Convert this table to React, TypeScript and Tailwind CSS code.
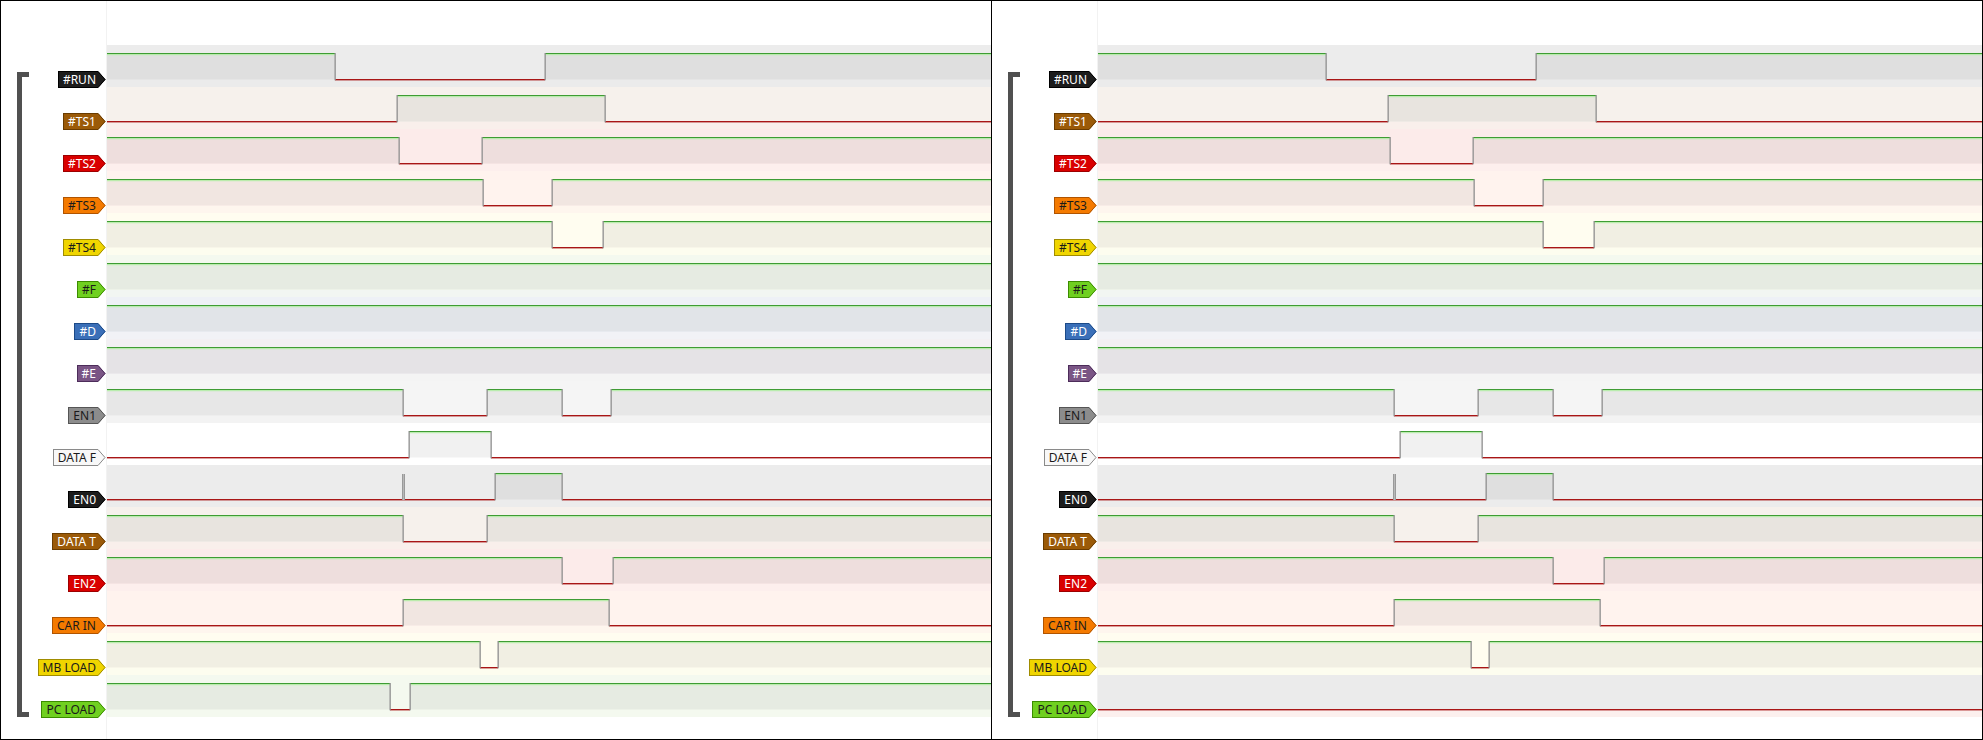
import React from 'react';

interface Row {
  label: string;
  tag: string;
  fill: string;
  stroke: string;
  bg: string;
  strip: string;
  high: boolean;
  t: number[];
  glitch?: number;
}

const WAVE_W = 884;

const base: Row[] = [
  { label: '#RUN', tag: 'bg-[#1c1c1c] border-[#000000] text-white', fill: '#1c1c1c', stroke: '#000000', bg: 'bg-[#ececec]', strip: '#ebebeb', high: true, t: [228, 438] },
  { label: '#TS1', tag: 'bg-[#9b5a08] border-[#6a3c00] text-white', fill: '#9b5a08', stroke: '#6a3c00', bg: 'bg-[#f6f1ec]', strip: '#f9efeb', high: false, t: [290, 498] },
  { label: '#TS2', tag: 'bg-[#d90000] border-[#9c0000] text-white', fill: '#d90000', stroke: '#9c0000', bg: 'bg-[#fcebea]', strip: '#fdefed', high: true, t: [292, 375] },
  { label: '#TS3', tag: 'bg-[#f47a00] border-[#b05400] text-[#1a1a1a]', fill: '#f47a00', stroke: '#b05400', bg: 'bg-[#fff3ee]', strip: '#fef6ee', high: true, t: [376, 445] },
  { label: '#TS4', tag: 'bg-[#f0d500] border-[#a08c00] text-[#1a1a1a]', fill: '#f0d500', stroke: '#a08c00', bg: 'bg-[#fffdf0]', strip: '#fdfdef', high: true, t: [445, 496] },
  { label: '#F', tag: 'bg-[#70d020] border-[#3c8c00] text-[#1a1a1a]', fill: '#70d020', stroke: '#3c8c00', bg: 'bg-[#f4f9ef]', strip: '#f2f6f2', high: true, t: [] },
  { label: '#D', tag: 'bg-[#3a6fb8] border-[#1c4a88] text-white', fill: '#3a6fb8', stroke: '#1c4a88', bg: 'bg-[#eef1f6]', strip: '#f1f2f6', high: true, t: [] },
  { label: '#E', tag: 'bg-[#7a5585] border-[#4c2c5a] text-white', fill: '#7a5585', stroke: '#4c2c5a', bg: 'bg-[#f2f0f3]', strip: '#f4f4f4', high: true, t: [] },
  { label: 'EN1', tag: 'bg-[#8c8c8c] border-[#555555] text-[#1a1a1a]', fill: '#8c8c8c', stroke: '#555555', bg: 'bg-[#f5f5f5]', strip: '#f3f3f3', high: true, t: [296, 380, 455, 504] },
  { label: 'DATA F', tag: 'bg-[#f8f8f8] border-[#8a8a8a] text-[#1a1a1a]', fill: '#f8f8f8', stroke: '#8a8a8a', bg: 'bg-[#ffffff]', strip: '#ffffff', high: false, t: [302, 384] },
  { label: 'EN0', tag: 'bg-[#1c1c1c] border-[#000000] text-white', fill: '#1c1c1c', stroke: '#000000', bg: 'bg-[#ececec]', strip: '#ececec', high: false, t: [388, 455], glitch: 295 },
  { label: 'DATA T', tag: 'bg-[#9b5a08] border-[#6a3c00] text-white', fill: '#9b5a08', stroke: '#6a3c00', bg: 'bg-[#f6f1ec]', strip: '#f9efeb', high: true, t: [296, 380] },
  { label: 'EN2', tag: 'bg-[#d90000] border-[#9c0000] text-white', fill: '#d90000', stroke: '#9c0000', bg: 'bg-[#fcebea]', strip: '#fdefed', high: true, t: [455, 506] },
  { label: 'CAR IN', tag: 'bg-[#f47a00] border-[#b05400] text-[#1a1a1a]', fill: '#f47a00', stroke: '#b05400', bg: 'bg-[#fff3ee]', strip: '#fef6ee', high: false, t: [296, 502] },
  { label: 'MB LOAD', tag: 'bg-[#f0d500] border-[#a08c00] text-[#1a1a1a]', fill: '#f0d500', stroke: '#a08c00', bg: 'bg-[#fffdf0]', strip: '#fdfdef', high: true, t: [373, 391] },
  { label: 'PC LOAD', tag: 'bg-[#70d020] border-[#3c8c00] text-[#1a1a1a]', fill: '#70d020', stroke: '#3c8c00', bg: 'bg-[#f4f9ef]', strip: '#f4f9ef', high: true, t: [283, 303] },
];

// right view: PC LOAD stays low
const second: Row[] = base.map((r) =>
  r.label === 'PC LOAD' ? { ...r, bg: 'bg-[#ebebeb]', strip: '#fcf0ee', high: false, t: [] } : r
);

const Tag: React.FC<{ r: Row }> = ({ r }) => (
  <div className="flex h-[17px]">
    <span className={`flex items-center h-full pl-[4px] pr-[2px] border-y border-l text-[12px] leading-none whitespace-nowrap ${r.tag}`}>
      {r.label}
    </span>
    <svg width="8" height="17" viewBox="0 0 8 17" className="block shrink-0">
      <path d="M0 0 L7.6 8.5 L0 17 Z" fill={r.fill} />
      <path d="M0 0.5 L7 8.5 L0 16.5" fill="none" stroke={r.stroke} strokeWidth="1" />
    </svg>
  </div>
);

const Wave: React.FC<{ r: Row }> = ({ r }) => {
  const xs = [0, ...r.t, WAVE_W];
  const segs = xs.slice(0, -1).map((a, i) => ({ a, b: xs[i + 1], hi: i % 2 === 0 ? r.high : !r.high }));
  return (
    <svg width={WAVE_W} height="42" viewBox={`0 0 ${WAVE_W} 42`} className="block">
      <rect x="0" y="35" width={WAVE_W} height="7" fill={r.strip} />
      {segs.map((s, i) =>
        s.hi ? (
          <g key={i}>
            <rect x={s.a} y="10" width={s.b - s.a} height="24.5" fill="#505050" fillOpacity="0.08" />
            <rect x={s.a} y="8" width={s.b - s.a} height="1.2" fill="#3f9c34" />
            <rect x={s.a} y="9.2" width={s.b - s.a} height="1" fill="#b4eea6" />
          </g>
        ) : (
          <rect key={i} x={s.a} y="34" width={s.b - s.a} height="1.4" fill="#a81616" />
        )
      )}
      {r.t.map((x) => (
        <rect key={x} x={x - 0.5} y="8" width="1.3" height="27.3" fill="#8e8e8e" />
      ))}
      {r.glitch !== undefined && (
        <g>
          <rect x={r.glitch} y="9" width="3" height="26" fill="#9a9a9a" />
          <rect x={r.glitch + 1} y="9" width="1" height="26" fill="#b8b8b8" />
        </g>
      )}
    </svg>
  );
};

const Panel: React.FC<{ rows: Row[] }> = ({ rows }) => (
  <div className="flex w-[990px] h-full shrink-0">
    <div className="flex w-[105px] shrink-0">
      <div className="w-[30px] shrink-0 pl-[16px] pt-[71px]">
        <div className="w-[12px] h-[645px] border-l-[5px] border-y-[5px] border-[#505050]" />
      </div>
      <div className="flex-1 flex flex-col items-end pt-[44px]">
        {rows.map((r) => (
          <div key={r.label} className="h-[42px] pt-[26px]">
            <Tag r={r} />
          </div>
        ))}
      </div>
    </div>
    <div className="flex flex-col w-[885px] border-l border-[#f2f2f2]">
      <div className="h-[44px]" />
      {rows.map((r) => (
        <div key={r.label} className={`h-[42px] ${r.bg}`}>
          <Wave r={r} />
        </div>
      ))}
    </div>
  </div>
);

export default function App() {
  return (
    <div className="w-[1983px] h-[740px] bg-white border border-black flex overflow-hidden font-['Noto_Sans',sans-serif]">
      <Panel rows={base} />
      <div className="w-px h-full bg-black shrink-0" />
      <Panel rows={second} />
    </div>
  );
}
